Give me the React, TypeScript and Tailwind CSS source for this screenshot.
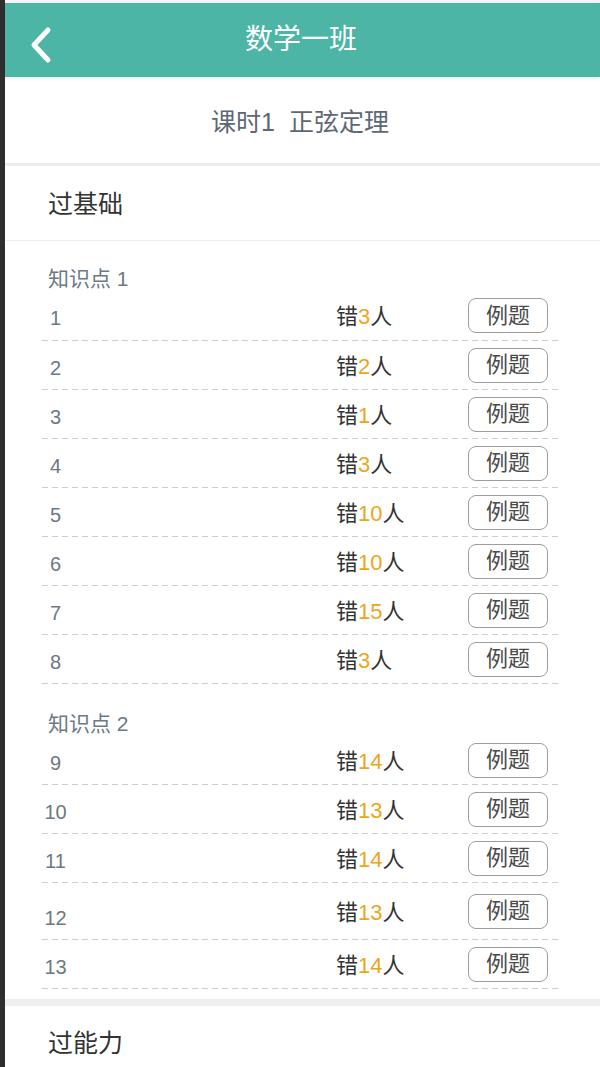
type Row = { no: number; wrong: number; h: string; nudge?: string };

const groups: { title: string; pt: string; rows: Row[] }[] = [
	{
		title: "知识点 1",
		pt: "pt-[26px]",
		rows: [
			{ no: 1, wrong: 3, h: "h-[50px]" },
			{ no: 2, wrong: 2, h: "h-[49px]" },
			{ no: 3, wrong: 1, h: "h-[49px]" },
			{ no: 4, wrong: 3, h: "h-[49px]" },
			{ no: 5, wrong: 10, h: "h-[49px]" },
			{ no: 6, wrong: 10, h: "h-[49px]" },
			{ no: 7, wrong: 15, h: "h-[49px]" },
			{ no: 8, wrong: 3, h: "h-[49px]" },
		],
	},
	{
		title: "知识点 2",
		pt: "pt-[28px]",
		rows: [
			{ no: 9, wrong: 14, h: "h-[49px]" },
			{ no: 10, wrong: 13, h: "h-[49px]" },
			{ no: 11, wrong: 14, h: "h-[49px]" },
			{ no: 12, wrong: 13, h: "h-[57px]", nudge: "pt-[14px]" },
			{ no: 13, wrong: 14, h: "h-[49px]" },
		],
	},
];

function Dashed() {
	return (
		<div className="h-px bg-[linear-gradient(to_right,#cdcdcd_0,#cdcdcd_6px,transparent_6px)] bg-[length:10px_1px] bg-repeat-x" />
	);
}

function QuestionRow({ row }: { row: Row }) {
	return (
		<div className={`flex flex-col ${row.h}`}>
			<div className="flex-1 flex items-center">
				<span className={`w-[27px] text-center text-[20px] text-[#6c7884] ${row.nudge ?? "pt-[5px]"}`}>
					{row.no}
				</span>
				<span className="ml-[267px] w-[132px] text-[22px] text-[#333] pt-[2px]">
					错<span className="text-[#eda520]">{row.wrong}</span>人
				</span>
				<button className="w-[80px] h-[35px] rounded-[8px] border border-[#9d9d9d] bg-white text-[22px] text-[#4a4a4a] leading-none">
					例题
				</button>
			</div>
			<Dashed />
		</div>
	);
}

export default function App() {
	return (
		<div
			className="min-h-[1067px] bg-white border-l-[5px] border-[#2e2e2e] overflow-hidden"
			style={{ fontFamily: '"Liberation Sans", "Noto Sans CJK SC", sans-serif' }}
		>
			<div className="h-[3px] bg-[#f4f4f4]" />
			<div className="h-[74px] bg-[#4db5a6] flex items-center relative shadow-[0_2px_3px_rgba(0,0,0,0.08)]">
				<svg
					className="absolute left-[24px] top-[22px]"
					width="24"
					height="40"
					viewBox="0 0 24 40"
					fill="none"
					stroke="white"
					strokeWidth="5"
					strokeLinecap="round"
					strokeLinejoin="round"
				>
					<polyline points="19,5 5,20 19,35" />
				</svg>
				<h1 className="flex-1 text-center text-[28px] text-white pr-[3px]">数学一班</h1>
			</div>
			<div className="h-[89px] flex items-center justify-center pt-[6px] pr-[5px] border-b-[3px] border-[#ececec] text-[25px] text-[#5d6873]">
				<span>课时1</span>
				<span className="ml-[14px]">正弦定理</span>
			</div>
			<div className="h-[75px] flex items-center pl-[43px] pt-[3px] border-b border-[#efefef]">
				<span className="text-[25px] text-[#333]">过基础</span>
			</div>
			<div className="pl-[37px] pr-[40px] pb-[10px]">
				{groups.map((g) => (
					<div key={g.title} className={g.pt}>
						<div className="pl-[6px] text-[21px] text-[#6c7884] leading-[24px]">{g.title}</div>
						{g.rows.map((row) => (
							<QuestionRow key={row.no} row={row} />
						))}
					</div>
				))}
			</div>
			<div className="h-[7px] bg-[#efefef]" />
			<div className="h-[76px] flex items-center pl-[43px]">
				<span className="text-[25px] text-[#333]">过能力</span>
			</div>
		</div>
	);
}
